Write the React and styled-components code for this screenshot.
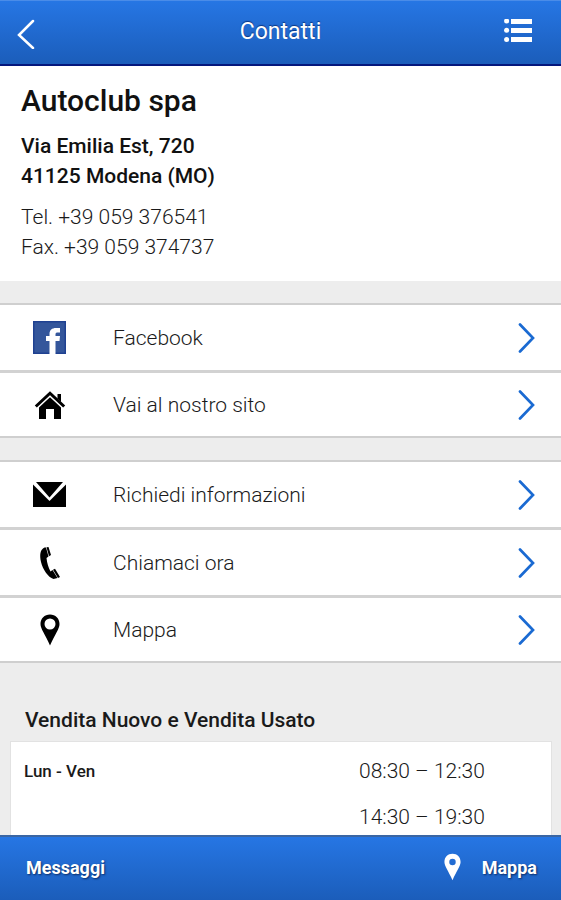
import React from 'react';
import styled, { createGlobalStyle } from 'styled-components';

const GlobalStyle = createGlobalStyle`
  * {
    box-sizing: border-box;
  }
  body {
    margin: 0;
    background: #ededed;
    color: #1a1a1a;
    font-family: Roboto, 'Liberation Sans', sans-serif;
  }
`;

const Page = styled.div`
  display: flex;
  flex-direction: column;
  height: 100vh;
`;

const Header = styled.header`
  display: grid;
  grid-template-columns: 1fr auto 1fr;
  align-items: center;
  flex-shrink: 0;
  height: 66px;
  padding: 0 28px 0 16px;
  background: linear-gradient(#2676e4, #1b5dba);
  border-top: 1px solid #4a8ce8;
  border-bottom: 2px solid #04177c;
`;

const HeaderTitle = styled.h1`
  margin: 0;
  padding: 0 0 2px 12px;
  color: #fff;
  font-size: 23px;
  line-height: 28px;
  font-weight: 400;
  text-shadow: 0 -1px 1px #0b3580;
`;

const IconButton = styled.button`
  display: flex;
  justify-self: ${(props) => props.$side};
  padding: 0;
  border: none;
  background: none;
  color: #fff;
  cursor: pointer;
`;

const Content = styled.main`
  flex: 1;
  min-height: 0;
  overflow-y: auto;
  scrollbar-width: none;
`;

const Dealer = styled.section`
  padding: 17px 21px 19px;
  background: #fff;
`;

const DealerName = styled.h2`
  margin: 0 0 12px;
  color: #111;
  font-size: 30px;
  line-height: 36px;
  font-weight: 500;
`;

const Address = styled.p`
  margin: 0 0 11px;
  color: #111;
  font-size: 21px;
  line-height: 30px;
  font-weight: 500;
`;

const Phones = styled.p`
  margin: 0;
  font-size: 21px;
  line-height: 30px;
  font-weight: 300;
`;

const LinkList = styled.nav`
  margin-top: 22px;
  background: #fff;
  border-top: 2px solid #cfcfcf;
  border-bottom: 2px solid #cfcfcf;
`;

const LinkRow = styled.a`
  display: flex;
  align-items: center;
  height: 68px;
  padding: 0 26px 0 33px;
  border-bottom: 3px solid #d2d2d2;
  color: #1a1a1a;
  font-size: 21px;
  font-weight: 300;
  text-decoration: none;

  &:last-child {
    height: 63px;
    border-bottom: none;
  }
`;

const RowIcon = styled.span`
  display: flex;
  justify-content: center;
  width: 33px;
  margin-right: 47px;
  color: #000;
`;

const RowLabel = styled.span`
  flex: 1;
`;

const Hours = styled.section`
  padding: 42px 9px 0 10px;
`;

const HoursTitle = styled.h3`
  margin: 0 0 6px;
  padding-left: 15px;
  font-size: 21px;
  line-height: 30px;
  font-weight: 500;
`;

const HoursTable = styled.table`
  width: 100%;
  padding: 6px 0;
  background: #fff;
  border: 1px solid #e2e2e2;
  border-spacing: 0;

  th,
  td {
    height: 46px;
    padding: 0;
    text-align: left;
  }
  th {
    padding-left: 13px;
    font-size: 17px;
    font-weight: 500;
  }
  td {
    width: 192px;
    font-size: 21px;
    font-weight: 300;
  }
`;

const Footer = styled.footer`
  display: flex;
  align-items: center;
  justify-content: space-between;
  flex-shrink: 0;
  height: 65px;
  padding: 0 24px 3px 26px;
  background: linear-gradient(#2676e4, #1b5dba);
  border-top: 2px solid #3b66a3;
`;

const FooterLink = styled.a`
  display: flex;
  align-items: center;
  gap: 21px;
  color: #fff;
  font-size: 18px;
  font-weight: 700;
  text-decoration: none;
  text-shadow: 1px 1px 2px #0a2c66;
`;

const BackIcon = () => (
  <svg width="20" height="32" viewBox="0 0 20 32" fill="none">
    <path d="M17 4L3 18L17 31" stroke="currentColor" strokeWidth="2.5" strokeLinecap="round" />
  </svg>
);

const ListIcon = () => (
  <svg width="29" height="28" viewBox="0 0 29 28" fill="currentColor">
    <circle cx="2.6" cy="2" r="2.500" />
    <circle cx="2.6" cy="11.200" r="2.500" />
    <circle cx="2.6" cy="20.500" r="2.500" />
    <rect x="7" y="0" width="21" height="5" />
    <rect x="7" y="9" width="21" height="5" />
    <rect x="7" y="18" width="21" height="5" />
  </svg>
);

const ChevronIcon = () => (
  <svg width="17" height="30" viewBox="0 0 17 30" fill="none">
    <path d="M2 1.500L15 15L2 28.500" stroke="#1a6ad2" strokeWidth="2.7" strokeLinecap="round" />
  </svg>
);

const FacebookIcon = () => (
  <svg width="33" height="33" viewBox="0 0 33 33">
    <rect width="33" height="33" fill="#1f4191" />
    <rect x="1.500" y="1.500" width="30" height="30" fill="#34569b" />
    <path
      d="M16.500 33V20H13V15H16.500V13C16.500 9 19 7 23 7H27V11.500H25C23 11.500 22.500 12 22.500 13.500V15H27L26.500 20H22.500V33Z"
      fill="#fff"
    />
  </svg>
);

const HomeIcon = () => (
  <svg width="32" height="30" viewBox="0 0 32 30">
    <path d="M1.800 16.500L16 3.200L30.200 16.500" fill="none" stroke="currentColor" strokeWidth="3" />
    <path d="M23.500 4H27V12L23.500 8.500Z" fill="currentColor" />
    <path d="M16 7.200L27 17.500V29H20V19H12V29H5V17.500Z" fill="currentColor" />
  </svg>
);

const MailIcon = () => (
  <svg width="33" height="25" viewBox="0 0 33 25" fill="currentColor">
    <path d="M3 0H30L16.500 15.500Z" />
    <path d="M0 2.500L16.500 19L33 2.500V25H0Z" />
  </svg>
);

const PhoneIcon = () => (
  <svg width="22" height="34" viewBox="0 0 22 34" fill="currentColor">
    <path d="M5.500 1.500C1 3.500 0.500 9 2 16C4 24 9 31 14.500 33L18.500 32L13.500 24L11.500 25.500C9.500 22 8 17 7.500 12L9.500 10.500L7 1.500Z" />
    <path d="M7.500 1.200L9.500 1L12 9L10 10.200Z" />
    <path d="M14 23.800L16 22.800L21 31L19 32Z" />
  </svg>
);

const PinIcon = ({ width, height, hole }) => (
  <svg width={width} height={height} viewBox="0 0 20 32" fill="currentColor">
    <path
      fillRule="evenodd"
      d={`M10 0.500C4.500 0.500 0.500 4.500 0.500 10C0.500 15 5 20 10 31.500C15 20 19.500 15 19.500 10C19.500 4.500 15.500 0.500 10 0.500ZM10 ${10 - hole}a${hole} ${hole} 0 1 1 0 ${2 * hole}a${hole} ${hole} 0 1 1 0 ${-2 * hole}Z`}
    />
  </svg>
);

const siteLinks = [
  { id: 1, label: 'Facebook', icon: <FacebookIcon /> },
  { id: 2, label: 'Vai al nostro sito', icon: <HomeIcon /> },
];

const contactLinks = [
  { id: 1, label: 'Richiedi informazioni', icon: <MailIcon /> },
  { id: 2, label: 'Chiamaci ora', icon: <PhoneIcon /> },
  { id: 3, label: 'Mappa', icon: <PinIcon width={20} height={32} hole={5.5} /> },
];

const Links = ({ items }) => (
  <LinkList>
    {items.map((item) => (
      <LinkRow key={item.id} href="#">
        <RowIcon>{item.icon}</RowIcon>
        <RowLabel>{item.label}</RowLabel>
        <ChevronIcon />
      </LinkRow>
    ))}
  </LinkList>
);

const App = () => (
  <Page>
    <GlobalStyle />
    <Header>
      <IconButton $side="start" aria-label="Indietro">
        <BackIcon />
      </IconButton>
      <HeaderTitle>Contatti</HeaderTitle>
      <IconButton $side="end" aria-label="Menu">
        <ListIcon />
      </IconButton>
    </Header>
    <Content>
      <Dealer>
        <DealerName>Autoclub spa</DealerName>
        <Address>
          Via Emilia Est, 720
          <br />
          41125 Modena (MO)
        </Address>
        <Phones>
          Tel. +39 059 376541
          <br />
          Fax. +39 059 374737
        </Phones>
      </Dealer>
      <Links items={siteLinks} />
      <Links items={contactLinks} />
      <Hours>
        <HoursTitle>Vendita Nuovo e Vendita Usato</HoursTitle>
        <HoursTable>
          <tbody>
            <tr>
              <th scope="row">Lun - Ven</th>
              <td>08:30 – 12:30</td>
            </tr>
            <tr>
              <th />
              <td>14:30 – 19:30</td>
            </tr>
          </tbody>
        </HoursTable>
      </Hours>
    </Content>
    <Footer>
      <FooterLink href="#">Messaggi</FooterLink>
      <FooterLink href="#">
        <PinIcon width={17} height={28} hole={3.8} />
        Mappa
      </FooterLink>
    </Footer>
  </Page>
);

export default App;
